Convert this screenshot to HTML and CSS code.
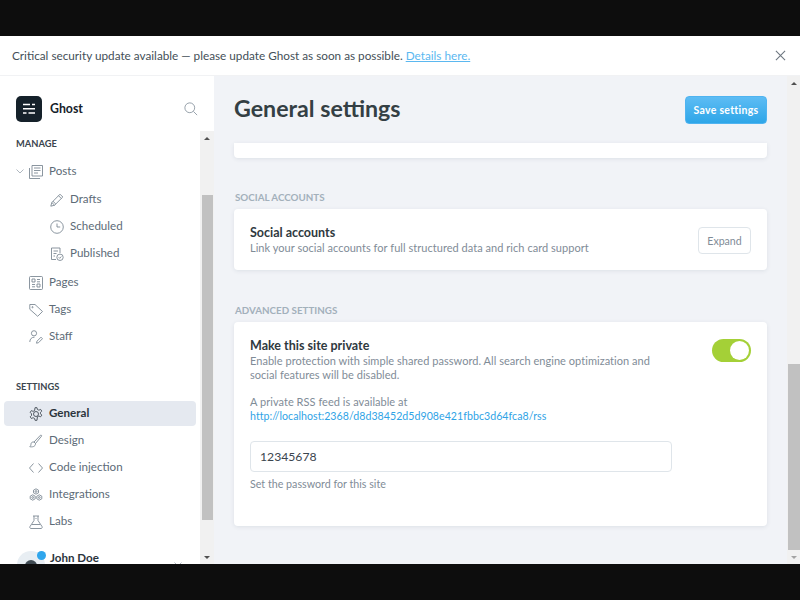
FILE: index.html
```html
<!DOCTYPE html>
<html lang="en">
<head>
<meta charset="utf-8">
<title>General settings - Ghost</title>
<link rel="stylesheet" href="styles.css">
</head>
<body>
<div class="window">
  <div class="banner">
    <p class="banner-text">Critical security update available — please update Ghost as soon as possible. <a class="banner-link" href="#">Details here.</a></p>
    <svg class="banner-close" viewBox="0 0 12 12"><path d="M1 1l10 10M11 1L1 11"/></svg>
  </div>
  <div class="app">
    <aside class="sidebar">
      <div class="brand">
        <span class="logo"><svg viewBox="0 0 26 26"><path d="M7 8.600h7M16 8.600h3M7 12.800h12M7 17h3.500M12.500 17H19"/></svg></span>
        <span class="brand-name">Ghost</span>
        <svg class="icon search" viewBox="0 0 16 16"><circle cx="6.600" cy="6.600" r="5.600"/><path d="M10.800 10.800L15 15"/></svg>
      </div>
      <div class="side-body">
        <nav class="nav">
          <h3 class="nav-head">MANAGE</h3>
          <ul class="nav-list">
            <li class="item first">
              <svg class="chev" viewBox="0 0 8 5"><path d="M.5.5L4 4 7.500.5"/></svg>
              <svg class="icon" viewBox="0 0 14 14"><path d="M3 .5h10.500v10.500H3zM.5 3v10.500h10.500M5 3h6.500M5 5.500h6.500M5 8h4"/></svg>
              <span>Posts</span>
            </li>
            <li class="item sub"><svg class="icon" viewBox="0 0 14 14"><path d="M.8 13.200l1-3.700L10 1.200l2.800 2.800-8.200 8.200zM8.500 2.700l2.800 2.800M1.800 9.500l2.800 2.700M3 8.300l2.800 2.700"/></svg><span>Drafts</span></li>
            <li class="item sub"><svg class="icon" viewBox="0 0 14 14"><circle cx="7" cy="7" r="6.300"/><path d="M7 3.500V7h3.200"/></svg><span>Scheduled</span></li>
            <li class="item sub"><svg class="icon" viewBox="0 0 14 14"><path d="M6 12.500H1.500v-11.500h8.500V6M3.500 4h4.500M3.500 6.500h3M3.500 9h1.500"/><circle cx="10" cy="10.300" r="3.200"/><path d="M8.700 10.300l1 1 1.600-1.800"/></svg><span>Published</span></li>
            <li class="item top"><svg class="icon" viewBox="0 0 14 14"><rect x=".5" y=".5" width="13" height="13" rx="1"/><path d="M3 3h3v3H3zM8 3.500h3M8 5.800h3M3 8.500h3M3 10.800h3M8 8h3v3H8z"/></svg><span>Pages</span></li>
            <li class="item"><svg class="icon" viewBox="0 0 14 14"><path d="M.8 1.500h5.200l7.500 7-4.800 4.800-7.900-7z"/><circle cx="3.500" cy="4.200" r=".6"/></svg><span>Tags</span></li>
            <li class="item"><svg class="icon" viewBox="0 0 14 14"><circle cx="5" cy="3.300" r="2.600"/><path d="M.8 12c0-3 1.800-4.800 4.700-4.800M7.500 13.200l.5-2 4-4 1.500 1.500-4 4z"/></svg><span>Staff</span></li>
          </ul>
          <h3 class="nav-head settings">SETTINGS</h3>
          <ul class="nav-list second">
            <li class="item active"><svg class="icon" viewBox="0 0 14 14"><circle cx="7" cy="7" r="2.500"/><path d="M6 .7h2l.4 1.800 1.500.7 1.700-.8 1.200 1.700-1.300 1.200v1.500l1.300 1.300-1.200 1.700-1.700-.8-1.500.8L8 13.300H6l-.4-1.800-1.500-.8-1.700.8-1.200-1.700 1.300-1.300V6.800L1.200 5.300l1.200-1.700 1.700.8 1.500-.8z"/></svg><span>General</span></li>
            <li class="item"><svg class="icon" viewBox="0 0 14 14"><path d="M5 8l6.500-6.800c.6-.5 1.500.3 1 1L6.500 9.500zM5 8c-2-.3-3 .8-3 2.200 0 1-.4 1.800-1.200 2.500 2.200.4 5.700.3 5.700-3.200"/></svg><span>Design</span></li>
            <li class="item"><svg class="icon" viewBox="0 0 14 14"><path d="M4.500 2.500L.5 7l4 4.500M9.500 2.500l4 4.500-4 4.500"/></svg><span>Code injection</span></li>
            <li class="item"><svg class="icon" viewBox="0 0 14 14"><path d="M7 .8l2.500 1.400v2.600L7 6.200 4.500 4.800V2.200zM3.700 6.800l2.500 1.400v2.600l-2.500 1.400-2.500-1.400V8.200zM10.300 6.800l2.500 1.400v2.600l-2.500 1.400-2.500-1.400V8.200z"/><circle cx="7" cy="3.500" r=".9"/><circle cx="3.700" cy="9.500" r=".9"/><circle cx="10.300" cy="9.500" r=".9"/></svg><span>Integrations</span></li>
            <li class="item"><svg class="icon" viewBox="0 0 14 14"><path d="M4 1h6M5 1v4.500L1 11.500c-.5 1 0 2 1 2h10c1 0 1.500-1 1-2L9 5.500V1M3 9.500h8M6.500 3.500h1"/></svg><span>Labs</span></li>
          </ul>
          <div class="user">
            <span class="avatar"><span class="avatar-head"></span><span class="avatar-dot"></span></span>
            <span class="user-name">John Doe</span>
            <svg class="chev user-chev" viewBox="0 0 8 5"><path d="M.5.5L4 4 7.500.5"/></svg>
          </div>
        </nav>
        <div class="scrollbar side-scroll">
          <span class="arrow up dark"></span>
          <span class="thumb-gap side-gap-top"></span>
          <span class="thumb side-thumb"></span>
          <span class="thumb-gap fill"></span>
          <span class="arrow down dark"></span>
        </div>
      </div>
    </aside>
    <main class="main">
      <div class="content">
        <header class="page-head">
          <h1 class="page-title">General settings</h1>
          <button class="save" type="button">Save settings</button>
        </header>
        <div class="card stub"></div>
        <h4 class="section-head social">SOCIAL ACCOUNTS</h4>
        <section class="card card-row">
          <div class="card-text">
            <h5 class="card-title">Social accounts</h5>
            <p class="card-desc">Link your social accounts for full structured data and rich card support</p>
          </div>
          <button class="expand" type="button">Expand</button>
        </section>
        <h4 class="section-head advanced">ADVANCED SETTINGS</h4>
        <section class="card private">
          <div class="private-top">
            <div class="private-text">
              <h5 class="card-title">Make this site private</h5>
              <p class="card-desc">Enable protection with simple shared password. All search engine optimization and social features will be disabled.</p>
              <p class="card-desc rss">A private RSS feed is available at<br><a class="rss-link" href="#">http://localhost:2368/d8d38452d5d908e421fbbc3d64fca8/rss</a></p>
            </div>
            <span class="toggle"><span class="knob"></span></span>
          </div>
          <input class="password" type="text" value="12345678" aria-label="Password">
          <p class="hint">Set the password for this site</p>
        </section>
      </div>
      <div class="scrollbar main-scroll">
        <span class="arrow up dark"></span>
        <span class="thumb-gap fill"></span>
        <span class="thumb main-thumb"></span>
        <span class="arrow down"></span>
      </div>
    </main>
  </div>
</div>
</body>
</html>
```
FILE: styles.css
```css
* { box-sizing: border-box; }
html, body { margin: 0; height: 100%; }
body {
  background: #0d0d0d;
  padding: 36px 0;
  font-family: Lato, "Open Sans", sans-serif;
  color: #3b454e;
  overflow: hidden;
}
h1, h3, h4, h5, p, ul { margin: 0; padding: 0; }
ul { list-style: none; }
svg { display: block; flex: none; }

.window { height: 528px; display: flex; flex-direction: column; background: #fff; overflow: hidden; }

.banner {
  height: 40px; flex: none; display: flex; align-items: center; justify-content: space-between;
  padding: 0 14px 0 12px; background: #fff; border-bottom: 1px solid #f1f2f4;
}
.banner-text { font-size: 11.750px; color: #444f58; white-space: nowrap; }
.banner-link { color: #5bb8f0; }
.banner-close { width: 11px; height: 11px; fill: none; stroke: #6e7780; stroke-width: 1.200; }

.app { flex: 1; min-height: 0; display: flex; }

.sidebar { width: 214px; flex: none; display: flex; flex-direction: column; background: #fff; }
.brand { height: 55px; flex: none; display: flex; align-items: center; padding: 10px 16px 0; }
.logo { width: 26px; height: 26px; border-radius: 5px; background: #15212a; }
.logo svg { width: 26px; height: 26px; fill: none; stroke: #fff; stroke-width: 1.500; }
.brand-name { margin-left: 8px; font-size: 12.300px; font-weight: 700; color: #15212a; }
.search { margin-left: auto; width: 14px; height: 14px; }

.icon { fill: none; stroke: #76838f; stroke-width: .850; }
.item .icon { width: 14px; height: 14px; }
.item span { margin-bottom: 2px; }
.chev { width: 8px; height: 5px; fill: none; stroke: #9aa5ae; stroke-width: .800; }

.side-body { flex: 1; min-height: 0; display: flex; }
.nav { flex: 1; min-width: 0; overflow: hidden; padding-top: 6px; }
.nav-head { padding-left: 16px; height: 14px; font-size: 9.300px; line-height: 14px; font-weight: 700; color: #3b454e; }
.settings { margin-top: 31px; }
.nav-list { margin-top: 8px; }
.second { margin-top: 7px; }
.item {
  position: relative; height: 25px; margin: 0 4px 2px; border-radius: 4px; padding-left: 25px;
  display: flex; align-items: center; gap: 6px; font-size: 11.600px; color: #5d6b77; white-space: nowrap;
}
.first { margin-bottom: 3px; }
.item .chev { position: absolute; left: 12px; top: 10px; }
.sub { padding-left: 46px; gap: 6px; }
.top { margin-top: 4px; }
.active { background: #e5e9f0; color: #2b343c; font-weight: 700; }
.active .icon { stroke: #3b454e; }

.user { display: flex; align-items: flex-start; margin-top: 17px; padding-left: 17px; }
.avatar { position: relative; width: 28px; height: 28px; border-radius: 50%; background: #e8eef3; flex: none; }
.avatar-head { position: absolute; left: 8px; top: 9px; width: 12px; height: 12px; border-radius: 50%; background: #3f4a52; }
.avatar-dot { position: absolute; right: -1px; top: 0; width: 9px; height: 9px; border-radius: 50%; background: #30a6ec; }
.user-name { margin-left: 5px; font-size: 11.600px; font-weight: 700; line-height: 14px; color: #2b343c; }
.user-chev { margin: 11px 18px 0 auto; }

.scrollbar { flex: none; background: #f1f1f1; display: flex; flex-direction: column; align-items: stretch; }
.side-scroll { width: 14px; }
.main-scroll { width: 13px; }
.arrow { height: 14px; flex: none; display: flex; align-items: center; justify-content: center; }
.arrow::before { content: ""; width: 0; height: 0; border-left: 3.500px solid transparent; border-right: 3.500px solid transparent; }
.up::before { border-bottom: 3.500px solid #a3a3a3; }
.down::before { border-top: 3.500px solid #a3a3a3; }
.dark.up::before { border-bottom-color: #505050; }
.dark.down::before { border-top-color: #505050; }
.thumb-gap { display: block; }
.fill { flex: 1; }
.side-gap-top { height: 50px; flex: none; }
.thumb { display: block; background: #c1c1c1; flex: none; }
.side-thumb { height: 325px; margin: 0 1px 0 2px; }
.main-thumb { height: 186px; margin-left: 1px; }

.main { flex: 1; min-width: 0; display: flex; background: #f1f3f7; }
.content { flex: 1; min-width: 0; padding: 0 20px; overflow: hidden; }
.page-head { height: 67px; display: flex; align-items: center; justify-content: space-between; }
.page-title { font-size: 23.200px; font-weight: 700; color: #343f44; line-height: 1; margin-bottom: 2px; }
.save {
  width: 82px; height: 28px; border: 1px solid #4fb3f0; border-radius: 4px; padding: 0;
  background: linear-gradient(#5dbcf4, #2ea6e8); color: #fff; font: 700 10.500px Lato, sans-serif; letter-spacing: .3px;
}

.card { background: #fff; border-radius: 4px; box-shadow: 0 1px 4px rgba(50, 70, 90, .1); }
.stub { height: 15px; border-radius: 0 0 4px 4px; }
.section-head { padding-left: 1px; font-size: 9.800px; font-weight: 700; line-height: 14px; color: #a3b0bb; }
.social { margin-top: 32px; }
.advanced { margin-top: 33px; }
.social + .card, .advanced + .card { margin-top: 5px; }

.card-row { height: 61px; padding: 1px 16px 0; display: flex; align-items: center; justify-content: space-between; }
.card-title { font-size: 12.500px; font-weight: 700; line-height: 16px; color: #2f3940; }
.card-desc { font-size: 11px; line-height: 14px; color: #7f8c97; letter-spacing: .04px; }
.expand {
  width: 53px; height: 27px; padding: 1px 0 0; background: #fff; border: 1px solid #dfe5ea; border-radius: 4px;
  font: 10.600px Lato, sans-serif; color: #7f8c97;
}

.private { height: 204px; padding: 16px 16px 0; }
.private-top { display: flex; justify-content: space-between; }
.private-text { width: 420px; }
.rss { margin-top: 13px; }
.rss-link { color: #2fa3e6; text-decoration: none; font-size: 10.600px; }
.toggle { width: 39px; height: 23px; margin-top: 1px; border-radius: 12px; background: #a4d037; position: relative; flex: none; }
.knob { position: absolute; right: 2px; top: 2px; width: 19px; height: 19px; border-radius: 50%; background: #fff; }
.password {
  display: block; width: 422px; height: 31px; margin-top: 18px; padding: 0 9px; border: 1px solid #dfe5ea; border-radius: 4px;
  background: #fff; font: 12.200px Lato, sans-serif; color: #3b454e; outline: none;
}
.hint { margin-top: 4px; font-size: 10.700px; line-height: 16px; color: #7f8c97; }
```
